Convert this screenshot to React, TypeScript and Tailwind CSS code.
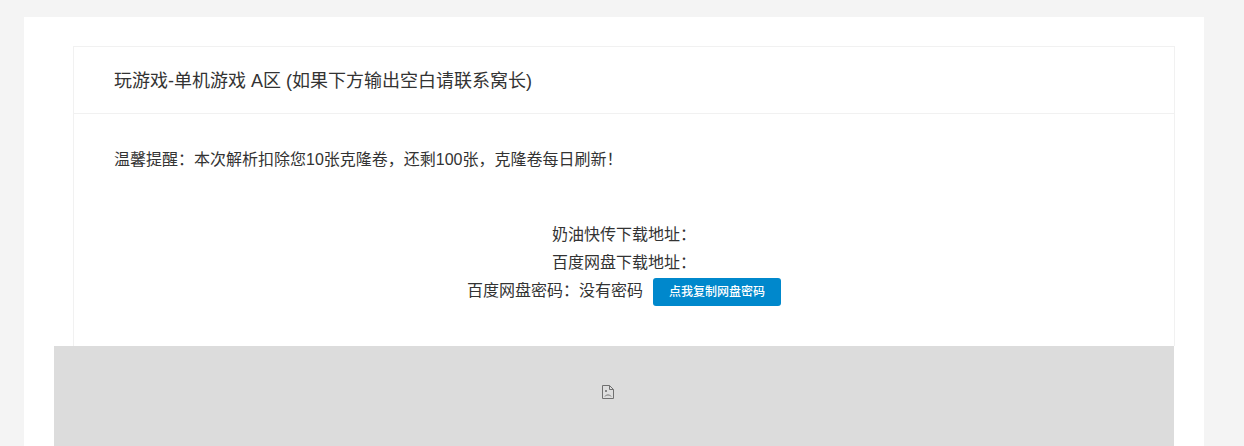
export default function App() {
  return (
    <div className="h-[446px] overflow-hidden bg-[#f4f4f4] pt-[17px] pl-[24px] font-['Liberation_Sans','Noto_Sans_CJK_SC',sans-serif] text-[#333333]">
      <div className="h-[429px] w-[1180px] overflow-hidden bg-white pt-[29px] pl-[30px]">
        <div className="ml-[19px] h-[300px] w-[1102px] border border-b-0 border-[#f1f1f1]">
          <div className="flex h-[67px] items-center border-b border-[#f1f1f1] pt-[2px] pl-[40px] text-[18px] leading-[28px]">
            玩游戏-单机游戏 A区 (如果下方输出空白请联系窝长)
          </div>
          <div className="pt-[32px] pl-[40px] text-[16px] leading-[28px]">
            温馨提醒：本次解析扣除您10张克隆卷，还剩100张，克隆卷每日刷新！
          </div>
          <div className="mt-[47px] flex flex-col items-center text-[16px] leading-[28px]">
            <div>奶油快传下载地址：</div>
            <div>百度网盘下载地址：</div>
            <div className="flex items-start">
              <span>百度网盘密码：没有密码</span>
              <button className="mt-[1px] ml-[10px] h-[28px] w-[128px] rounded-[3px] bg-[#0088cc] text-[12px] leading-[28px] font-medium text-white">
                点我复制网盘密码
              </button>
            </div>
          </div>
        </div>
        <div className="flex h-[100px] w-[1120px] bg-[#dcdcdc] pt-[37px] pl-[546px]">
          <svg width="16" height="16" viewBox="0 0 16 16" fill="none" className="mt-[1px] shrink-0">
            <path d="M2.5 1.5H9.5L13.5 5.5V14.5H2.5Z" stroke="#707070" fill="#dedede" />
            <path d="M9.5 1.5V5.5H13.5" stroke="#707070" />
            <path d="M5 12.5L6.5 11H9.5L11 12.5" stroke="#757575" />
            <rect x="5" y="6" width="2" height="2" fill="#858585" />
          </svg>
        </div>
      </div>
    </div>
  );
}
